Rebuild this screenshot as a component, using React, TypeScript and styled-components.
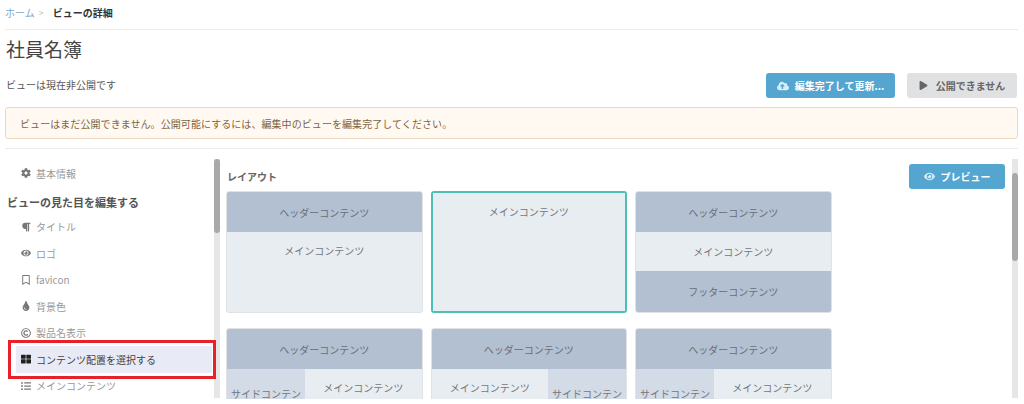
import { ReactNode } from "react";
import styled, { createGlobalStyle } from "styled-components";
import {
  FaCloudUploadAlt,
  FaCog,
  FaEye,
  FaListUl,
  FaParagraph,
  FaPlay,
  FaRegBookmark,
  FaRegCopyright,
  FaThLarge,
  FaTint,
} from "react-icons/fa";

const navItems: { icon: ReactNode; label: string }[] = [
  { icon: <FaParagraph />, label: "タイトル" },
  { icon: <FaEye />, label: "ロゴ" },
  { icon: <FaRegBookmark />, label: "favicon" },
  { icon: <FaTint />, label: "背景色" },
  { icon: <FaRegCopyright />, label: "製品名表示" },
];

export default function App() {
  return (
    <Page>
      <GlobalStyle />
      <Breadcrumb>
        <Crumb>ホーム</Crumb>
        <Sep>&gt;</Sep>
        <Current>ビューの詳細</Current>
      </Breadcrumb>
      <Title>社員名簿</Title>
      <StatusRow>
        <StatusText>ビューは現在非公開です</StatusText>
        <Actions>
          <Button $width={129}>
            <FaCloudUploadAlt size={12} />
            編集完了して更新...
          </Button>
          <Button $width={110} $disabled>
            <FaPlay size={9} />
            公開できません
          </Button>
        </Actions>
      </StatusRow>
      <Alert>ビューはまだ公開できません。公開可能にするには、編集中のビューを編集完了してください。</Alert>
      <Split>
        <Sidebar>
          <NavItem>
            <NavIcon><FaCog /></NavIcon>
            基本情報
          </NavItem>
          <NavHeading>ビューの見た目を編集する</NavHeading>
          {navItems.map((item) => (
            <NavItem key={item.label}>
              <NavIcon>{item.icon}</NavIcon>
              {item.label}
            </NavItem>
          ))}
          <NavItem $active>
            <NavIcon $active><FaThLarge /></NavIcon>
            コンテンツ配置を選択する
            <RedMark />
          </NavItem>
          <NavItem>
            <NavIcon><FaListUl /></NavIcon>
            メインコンテンツ
          </NavItem>
        </Sidebar>
        <Scrollbar $thumbTop={0} $thumbHeight={74} />
        <Content>
          <ContentHead>
            <SectionLabel>レイアウト</SectionLabel>
            <Button $width={96}>
              <FaEye size={11} />
              プレビュー
            </Button>
          </ContentHead>
          <CardGrid>
            <Card>
              <HeadCell>ヘッダーコンテンツ</HeadCell>
              <MainCell>メインコンテンツ</MainCell>
            </Card>
            <Card $selected>
              <MainCell>メインコンテンツ</MainCell>
            </Card>
            <Card>
              <HeadCell>ヘッダーコンテンツ</HeadCell>
              <MiddleCell>メインコンテンツ</MiddleCell>
              <FootCell>フッターコンテンツ</FootCell>
            </Card>
            <Card>
              <HeadCell>ヘッダーコンテンツ</HeadCell>
              <BodyRow $columns="78px 1fr">
                <SideCell>サイドコンテンツ</SideCell>
                <MainCell>メインコンテンツ</MainCell>
              </BodyRow>
            </Card>
            <Card>
              <HeadCell>ヘッダーコンテンツ</HeadCell>
              <BodyRow $columns="1fr 78px">
                <MainCell>メインコンテンツ</MainCell>
                <SideCell>サイドコンテンツ</SideCell>
              </BodyRow>
            </Card>
            <Card>
              <HeadCell>ヘッダーコンテンツ</HeadCell>
              <BodyRow $columns="78px 1fr">
                <SideCell>サイドコンテンツ</SideCell>
                <MainCell>メインコンテンツ</MainCell>
              </BodyRow>
            </Card>
          </CardGrid>
        </Content>
        <Scrollbar $thumbTop={14} $thumbHeight={88} />
      </Split>
    </Page>
  );
}

const GlobalStyle = createGlobalStyle`
  html, body {
    margin: 0;
    background: #fff;
    overflow: hidden;
  }
  body {
    font-family: "Noto Sans CJK JP", "Liberation Sans", sans-serif;
    font-size: 10px;
    color: #555;
  }
`;

const Page = styled.div`
  width: 1013px;
  height: 399px;
  margin-left: 5px;
  overflow: hidden;
`;

const Breadcrumb = styled.div`
  display: flex;
  align-items: center;
  height: 30px;
  padding-bottom: 5px;
  box-sizing: border-box;
  border-bottom: 1px solid #ececec;
`;

const Crumb = styled.span`
  color: #7aa9d4;
`;

const Sep = styled.span`
  margin: 0 9px 0 4px;
  color: #bbb;
  font-size: 9px;
`;

const Current = styled.span`
  color: #333;
  font-weight: 700;
`;

const Title = styled.h1`
  margin: 0;
  padding: 5px 0 3px 1px;
  height: 28px;
  font-size: 19px;
  line-height: 28px;
  font-weight: 400;
  color: #444;
`;

const StatusRow = styled.div`
  display: flex;
  align-items: center;
  justify-content: space-between;
  margin-top: 7px;
`;

const StatusText = styled.span`
  color: #555;
  padding-left: 1px;
  margin-top: -2px;
`;

const Actions = styled.div`
  display: flex;
  gap: 12px;
  margin-right: 1px;
`;

const Button = styled.div<{ $width: number; $disabled?: boolean }>`
  display: flex;
  align-items: center;
  justify-content: center;
  gap: ${({ $disabled }) => ($disabled ? 8 : 6)}px;
  width: ${({ $width }) => $width}px;
  height: 25px;
  box-sizing: border-box;
  border-radius: 3px;
  font-size: 10px;
  font-weight: 700;
  background: ${({ $disabled }) => ($disabled ? "#e0e1e2" : "#54a6d0")};
  color: ${({ $disabled }) => ($disabled ? "#666" : "#fff")};
  svg {
    color: ${({ $disabled }) => ($disabled ? "#666" : "#d9edf7")};
  }
`;

const Alert = styled.div`
  display: flex;
  align-items: center;
  height: 32px;
  margin-top: 9px;
  padding-left: 14px;
  box-sizing: border-box;
  background: #fff9f2;
  border: 1px solid #ead9c2;
  border-radius: 3px;
  color: #7d6440;
  letter-spacing: 0.07px;
`;

const Split = styled.div`
  display: flex;
  align-items: stretch;
  height: 250px;
  margin-top: 9px;
  padding-top: 10px;
  border-top: 1px solid #ececec;
  box-sizing: border-box;
`;

const Sidebar = styled.div`
  flex: 0 0 209px;
  display: flex;
  flex-direction: column;
  padding-top: 1px;
`;

const NavItem = styled.div<{ $active?: boolean }>`
  position: relative;
  display: flex;
  align-items: center;
  flex: 0 0 26.5px;
  height: 26.5px;
  margin: 0 2px 0 11px;
  padding-left: 5px;
  box-sizing: border-box;
  gap: 5px;
  background: ${({ $active }) => ($active ? "#e8eaf6" : "transparent")};
  color: ${({ $active }) => ($active ? "#444" : "#999")};
`;

const NavIcon = styled.span<{ $active?: boolean }>`
  display: flex;
  justify-content: center;
  width: 10px;
  font-size: 10px;
  color: ${({ $active }) => ($active ? "#222" : "#777")};
`;

const RedMark = styled.span`
  position: absolute;
  top: -6px;
  left: -8px;
  right: -4px;
  bottom: -6px;
  border: 3px solid #e8202a;
  pointer-events: none;
`;

const NavHeading = styled.div`
  flex: 0 0 20px;
  display: flex;
  align-items: center;
  padding-left: 2px;
  margin: 5px 0 2px;
  font-size: 11px;
  font-weight: 700;
  color: #555;
`;

const Scrollbar = styled.div<{ $thumbTop: number; $thumbHeight: number }>`
  flex: 0 0 6px;
  background: #e6e6e6;
  &::before {
    content: "";
    display: block;
    margin-top: ${({ $thumbTop }) => $thumbTop}px;
    height: ${({ $thumbHeight }) => $thumbHeight}px;
    background: #a9a9a9;
    border-radius: 3px;
  }
`;

const Content = styled.div`
  flex: 1;
  min-width: 0;
  padding: 5px 7px 0 6px;
`;

const ContentHead = styled.div`
  display: flex;
  align-items: flex-start;
  justify-content: space-between;
  height: 27px;
`;

const SectionLabel = styled.span`
  font-weight: 700;
  color: #666;
  margin: 5px 0 0 1px;
  line-height: 16px;
`;

const CardGrid = styled.div`
  display: grid;
  grid-template-columns: repeat(3, 196.5px);
  grid-auto-rows: 122px;
  gap: 15px 8px;
`;

const Card = styled.div<{ $selected?: boolean }>`
  display: flex;
  flex-direction: column;
  overflow: hidden;
  box-sizing: border-box;
  background: #e8edf1;
  border-radius: 3px;
  border: ${({ $selected }) => ($selected ? "2px solid #4dc0b5" : "1px solid #e0e3e6")};
  color: #74787e;
`;

const HeadCell = styled.div`
  flex: 0 0 40px;
  display: flex;
  align-items: center;
  justify-content: center;
  background: #b2c0d2;
  color: #686e77;
`;

const FootCell = styled(HeadCell)`
  flex: 1;
`;

const MainCell = styled.div`
  flex: 1;
  text-align: center;
  padding-top: 11px;
  line-height: 15px;
  background: #e8edf1;
`;

const MiddleCell = styled.div`
  flex: 0 0 39px;
  display: flex;
  align-items: center;
  justify-content: center;
  background: #e8edf1;
`;

const BodyRow = styled.div<{ $columns: string }>`
  flex: 1;
  display: grid;
  grid-template-columns: ${({ $columns }) => $columns};
`;

const SideCell = styled.div`
  background: #d3dbe6;
  text-align: center;
  padding: 17px 4px 0;
  line-height: 15px;
`;
